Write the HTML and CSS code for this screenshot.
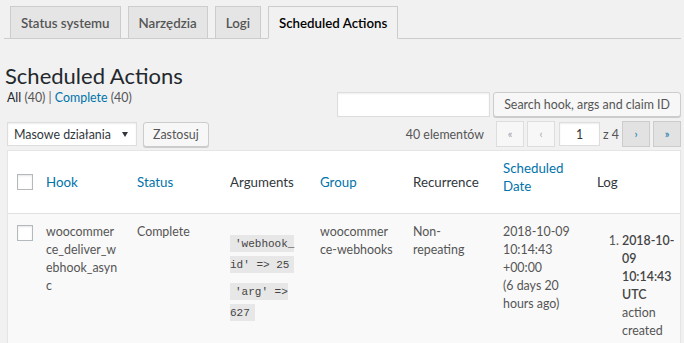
FILE: index.html
```html
<!DOCTYPE html>
<html lang="pl">
<head>
    <meta charset="UTF-8">
    <meta name="viewport" content="width=device-width, initial-scale=1.0">
    <title>Scheduled Actions</title>
    <link rel="stylesheet" href="styles.css">
</head>
<body>
<div class="wrap">
    <nav class="nav-tabs">
        <a class="nav-tab">Status systemu</a>
        <a class="nav-tab">Narzędzia</a>
        <a class="nav-tab">Logi</a>
        <a class="nav-tab active">Scheduled Actions</a>
    </nav>

    <h1 class="page-title">Scheduled Actions</h1>

    <div class="top-row">
        <ul class="views">
            <li><a class="current">All <span class="count">(40)</span></a> |&nbsp;</li>
            <li><a>Complete <span class="count">(40)</span></a></li>
        </ul>
        <div class="search-box">
            <input type="search" class="search-input">
            <button class="button">Search hook, args and claim ID</button>
        </div>
    </div>

    <div class="tablenav">
        <div class="bulk">
            <div class="select"><span>Masowe działania</span><span class="arrow"></span></div>
            <button class="button apply">Zastosuj</button>
        </div>
        <div class="pages">
            <span class="num">40 elementów</span>
            <span class="nav disabled">«</span>
            <span class="nav disabled">‹</span>
            <input class="current-page" type="text" value="1">
            <span class="total">z 4</span>
            <a class="nav">›</a>
            <a class="nav">»</a>
        </div>
    </div>

    <table class="actions">
        <colgroup>
            <col class="c-check">
            <col class="c-hook">
            <col class="c-status">
            <col class="c-args">
            <col class="c-group">
            <col class="c-recur">
            <col class="c-date">
            <col class="c-log">
        </colgroup>
        <thead>
            <tr>
                <th class="check"><input type="checkbox"></th>
                <th><a>Hook</a></th>
                <th><a>Status</a></th>
                <th>Arguments</th>
                <th><a>Group</a></th>
                <th>Recurrence</th>
                <th class="two-line"><a>Scheduled Date</a></th>
                <th>Log</th>
            </tr>
        </thead>
        <tbody>
            <tr>
                <td class="check"><input type="checkbox"></td>
                <td class="breaking hook">woocommerce_deliver_webhook_async</td>
                <td>Complete</td>
                <td>
                    <ul class="args">
                        <li><code>'webhook_id' =&gt; 25</code></li>
                        <li><code>'arg' =&gt; 627</code></li>
                    </ul>
                </td>
                <td class="breaking">woocommerce-webhooks</td>
                <td>Non-repeating</td>
                <td>2018-10-09 10:14:43 +00:00<br>(6 days 20 hours ago)</td>
                <td class="log-cell">
                    <ol class="log">
                        <li><strong>2018-10-09 10:14:43 UTC</strong> action created</li>
                    </ol>
                </td>
            </tr>
        </tbody>
    </table>
</div>
</body>
</html>
```
FILE: styles.css
```css
*,*::after,*::before{
    box-sizing: border-box;
}
body{
    margin: 0;
    background: #f1f1f1;
    color: #444;
    font-family: Lato, "Noto Sans", sans-serif;
    font-size: 12.4px;
    overflow: hidden;
}
a{
    color: #0073aa;
    text-decoration: none;
}
.wrap{
    padding: 0 3px 0 7px;
}

/* tabs */
.nav-tabs{
    display: flex;
    gap: 7px;
    margin-left: -3px;
    padding: 6px 0 0 6px;
    border-bottom: 1px solid #ccc;
}
.nav-tab{
    margin-bottom: -1px;
    padding: 4px 10px 3px;
    border: 1px solid #ccc;
    background: #e5e5e5;
    color: #555;
    font-size: 13.3px;
    font-weight: 600;
    line-height: 24px;
}
.nav-tab.active{
    background: #f1f1f1;
    border-bottom-color: #f1f1f1;
    color: #000;
}

.page-title{
    margin: 24px 0 0 -2px;
    font-size: 22px;
    font-weight: 400;
    line-height: 26px;
    color: #23282d;
}

/* views + search */
.top-row{
    display: flex;
    justify-content: space-between;
    align-items: flex-start;
}
.views{
    display: flex;
    margin: 0;
    padding: 0;
    list-style: none;
    line-height: 18px;
    color: #666;
}
.views a{
    color: #0073aa;
}
.views a.current{
    color: #23282d;
}
.views .count{
    color: #555;
}
.search-box{
    display: flex;
    gap: 3px;
    margin-top: 3px;
}
.search-input{
    width: 153px;
    height: 25px;
    margin: 0;
    border: 1px solid #ddd;
    background: #fff;
    box-shadow: inset 0 1px 2px rgba(0,0,0,.07);
}
.button{
    height: 25px;
    margin: 0;
    padding: 0 10px;
    border: 1px solid #ccc;
    border-radius: 3px;
    background: #f7f7f7;
    box-shadow: 0 1px 0 #ccc;
    color: #555;
    font-family: inherit;
    font-size: 12.4px;
}
.button.apply{
    padding: 0 9px;
}

/* tablenav */
.tablenav{
    display: flex;
    justify-content: space-between;
    align-items: center;
    height: 26px;
    margin-top: 4px;
}
.bulk{
    display: flex;
    align-items: center;
    gap: 6px;
}
.select{
    display: flex;
    align-items: center;
    width: 130px;
    height: 24px;
    padding: 0 8px 0 6px;
    border: 1px solid #ddd;
    background: #fff;
    box-shadow: inset 0 1px 2px rgba(0,0,0,.07);
    color: #32373c;
}
.select .arrow{
    margin-left: auto;
    border-left: 3px solid transparent;
    border-right: 3px solid transparent;
    border-top: 5px solid #32373c;
}
.pages{
    display: flex;
    align-items: center;
    color: #555;
}
.pages .num{
    margin-right: 9px;
}
.nav{
    display: flex;
    justify-content: center;
    align-items: center;
    width: 28px;
    height: 26px;
    margin-left: 3px;
    padding-bottom: 2px;
    border: 1px solid #ccc;
    background: #e2e2e2;
    color: #0073aa;
    font-size: 11px;
    line-height: 1;
}
.nav:first-of-type{
    margin-left: 0;
}
.nav.disabled{
    border-color: #ddd;
    background: #f7f7f7;
    color: #a0a5aa;
}
.current-page{
    width: 41px;
    height: 24px;
    margin: 0 3px 0 4px;
    border: 1px solid #ddd;
    background: #fff;
    box-shadow: inset 0 1px 2px rgba(0,0,0,.07);
    text-align: center;
    color: #32373c;
    font-family: inherit;
    font-size: 12.4px;
}
.pages .total{
    margin-right: 3px;
}

/* table */
.actions{
    width: 674px;
    margin-top: 3px;
    table-layout: fixed;
    border-collapse: separate;
    border-spacing: 0;
    border: 1px solid #e5e5e5;
    background: #fff;
    box-shadow: 0 1px 1px rgba(0,0,0,.04);
}
.c-check{ width: 28px; }
.c-hook{ width: 91px; }
.c-status{ width: 93px; }
.c-args{ width: 90px; }
.c-group{ width: 93px; }
.c-recur{ width: 90px; }
.c-date{ width: 94px; }
.c-log{ width: 93px; }

.actions thead tr{
    height: 62px;
}
.actions th{
    padding: 8px 10px;
    border-bottom: 1px solid #e1e1e1;
    text-align: left;
    vertical-align: middle;
    font-size: 13.3px;
    font-weight: 400;
    line-height: 18px;
    color: #32373c;
}
.actions th.two-line{
    padding-bottom: 18px;
}
.actions th.check,
.actions td.check{
    padding: 0 0 0 9px;
}
.actions td.check{
    padding-top: 11px;
}
.actions input[type=checkbox]{
    display: block;
    width: 16px;
    height: 16px;
    margin: 0;
    appearance: none;
    border: 1px solid #b4b9be;
    background: #fff;
    box-shadow: inset 0 1px 2px rgba(0,0,0,.1);
}
.actions tbody tr{
    background: #f9f9f9;
}
.actions td{
    padding: 9px 10px 60px;
    vertical-align: top;
    line-height: 18px;
    color: #555;
}
.actions td.hook{
    padding-right: 8px;
}
.actions td.log-cell{
    padding-right: 4px;
}
.breaking{
    overflow-wrap: anywhere;
}
.args{
    margin: 10px 0 0;
    padding: 0;
    list-style: none;
}
.args li{
    margin-bottom: 6px;
    line-height: 20px;
}
.args code{
    padding: 3px 5px 2px;
    background: rgba(0,0,0,.07);
    font-family: "Liberation Mono", monospace;
    font-size: 11px;
    color: #444;
    overflow-wrap: anywhere;
}
.log{
    margin: 9px 0 0;
    padding-left: 25px;
}
.log strong{
    font-weight: 600;
    color: #444;
}
```
